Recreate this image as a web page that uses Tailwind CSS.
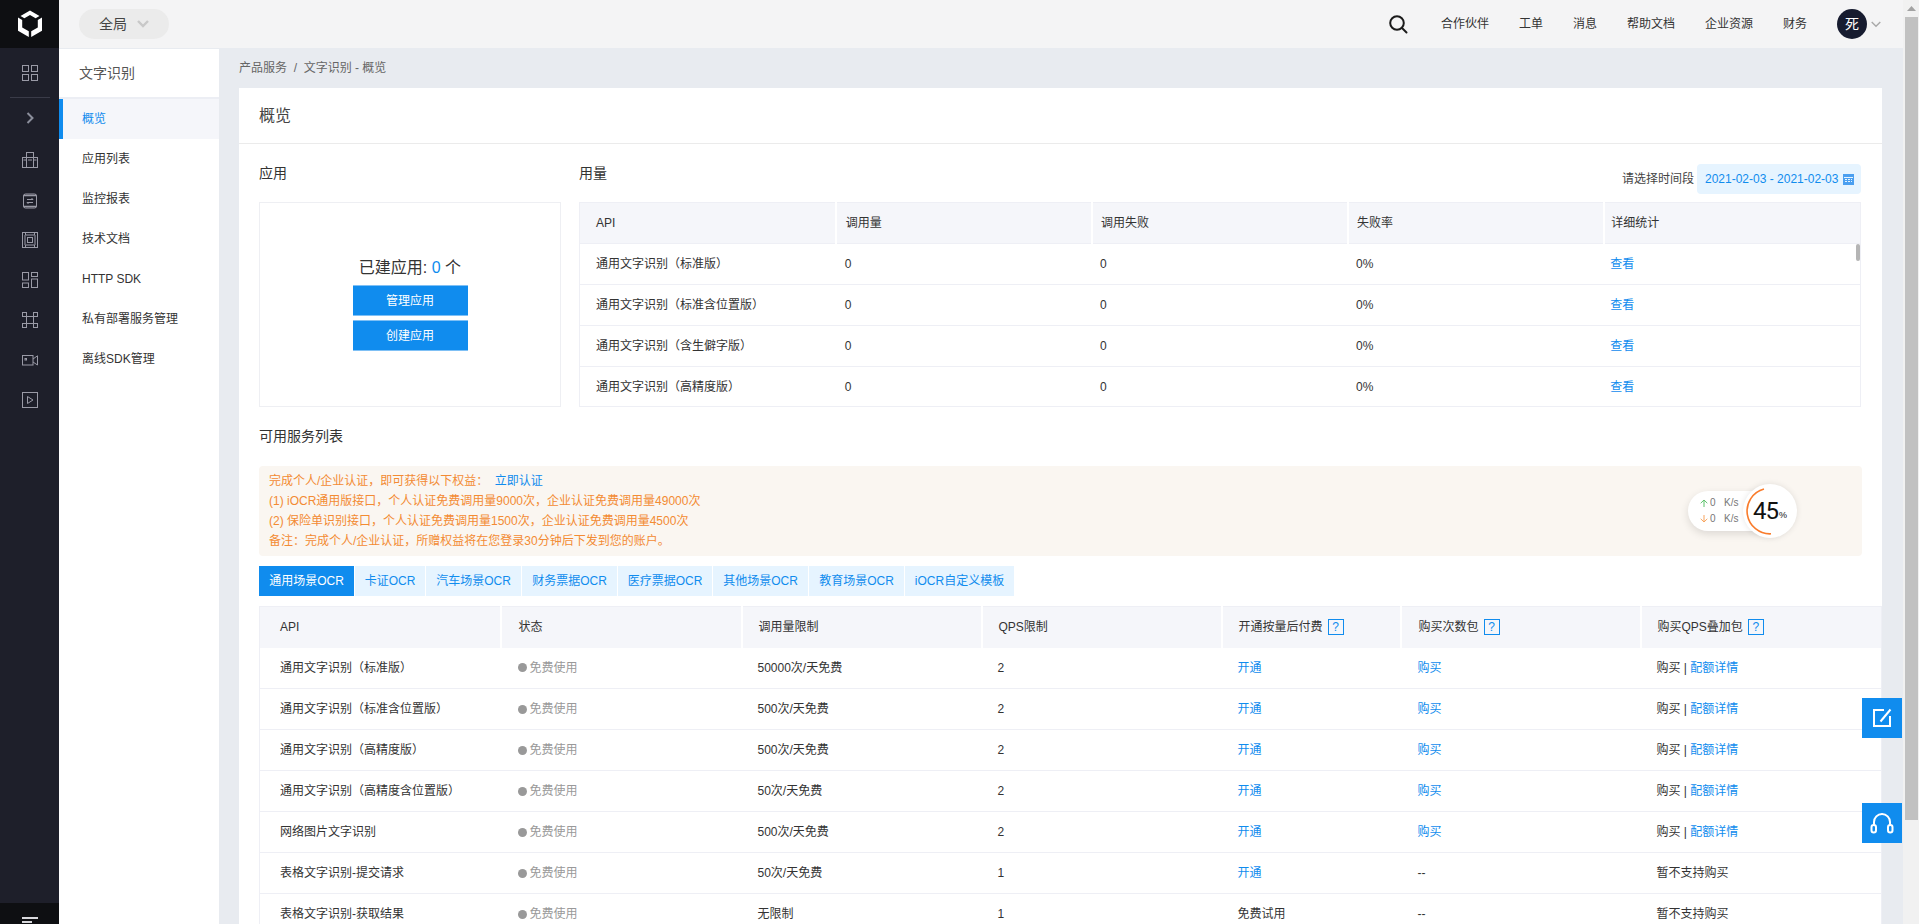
<!DOCTYPE html>
<html lang="zh-CN">
<head>
    <meta charset="UTF-8">
    <title>文字识别 - 概览</title>
    <script src="https://cdn.jsdelivr.net/npm/@tailwindcss/browser@4"></script>
</head>
<body class="flex h-[924px] overflow-hidden bg-[#e8ebf0] text-[12px] text-[#333] font-['Liberation_Sans','Noto_Sans_CJK_SC',sans-serif]">

    <!-- rail -->
    <aside class="w-[59px] shrink-0 h-full flex flex-col items-center bg-[#1e1f2a]">
        <div class="w-full h-[48px] bg-[#0e0f12] flex items-center justify-center">
            <svg width="26" height="28" viewBox="0 0 26 28" fill="#fff"><path d="M13 0.5 22.5 6 18.6 8.2 13 5 7.4 8.2 3.5 6Z"/><path d="M1 7.5 5.2 10V17.5L11.8 21.3V27L1 20.8Z"/><path d="M25 7.5 20.8 10V17.5L14.2 21.3V27L25 20.8Z"/></svg>
        </div>
        <div class="w-[40px] h-[50px] flex items-center justify-center border-b border-[#3a3b48]">
            <svg width="16" height="16" viewBox="0 0 16 16" fill="none" stroke="#9a9aa6"><rect x=".5" y=".5" width="6" height="6"/><rect x="9.5" y=".5" width="6" height="6"/><rect x=".5" y="9.5" width="6" height="6"/><rect x="9.5" y="9.5" width="6" height="6"/></svg>
        </div>
        <div class="h-[40px] flex items-center justify-center">
            <svg width="8" height="12" viewBox="0 0 8 12" fill="none" stroke="#8b8e9b" stroke-width="2"><path d="M1.5 1 6.5 6 1.5 11"/></svg>
        </div>
        <div class="h-[44px] flex items-center justify-center">
            <svg width="16" height="16" viewBox="0 0 16 16" fill="none" stroke="#9a9aa6"><rect x=".5" y="5.5" width="15" height="10"/><rect x="4.5" y=".5" width="7" height="15"/><path d="M6 5.5H10M1.5 8H4M12 8H14.5M6 8H10"/></svg>
        </div>
        <div class="h-[38px] flex items-center justify-center">
            <svg width="16" height="16" viewBox="0 0 16 16" fill="none" stroke="#9a9aa6"><rect x="1.5" y="1" width="13" height="14" rx="2"/><path d="M1.5 2.5H14.5M1.5 13.5H14.5" stroke-width="1.4"/><path d="M5 6.5H11L9.5 5M11 9.5H5L6.5 11"/></svg>
        </div>
        <div class="h-[40px] flex items-center justify-center">
            <svg width="16" height="16" viewBox="0 0 16 16" fill="none" stroke="#9a9aa6"><rect x=".5" y=".5" width="15" height="15"/><path d="M3.5 .5V3H12.5V.5M3.5 15.5V13H12.5V15.5M3 3V13M13 3V13"/><rect x="5.5" y="5.5" width="5" height="5"/></svg>
        </div>
        <div class="h-[40px] flex items-center justify-center">
            <svg width="16" height="16" viewBox="0 0 16 16" fill="none" stroke="#9a9aa6"><rect x=".5" y=".5" width="6" height="7.5"/><rect x=".5" y="11" width="6" height="4.5"/><rect x="9.5" y=".5" width="6" height="4"/><rect x="9.5" y="7" width="6" height="8.5"/></svg>
        </div>
        <div class="h-[40px] flex items-center justify-center">
            <svg width="16" height="16" viewBox="0 0 16 16" fill="none" stroke="#9a9aa6"><rect x=".5" y=".5" width="4" height="4"/><rect x="11.5" y=".5" width="4" height="4"/><rect x=".5" y="11.5" width="4" height="4"/><rect x="11.5" y="11.5" width="4" height="4"/><path d="M4.5 4.5H11.5V11.5H4.5Z"/></svg>
        </div>
        <div class="h-[40px] flex items-center justify-center">
            <svg width="16" height="11" viewBox="0 0 16 11" fill="none" stroke="#9a9aa6"><rect x=".5" y=".5" width="10.5" height="9.5"/><rect x="3" y="3.5" width="1.5" height="1.5"/><path d="M11 4 15.5 .8V10L11 7"/></svg>
        </div>
        <div class="h-[40px] flex items-center justify-center">
            <svg width="16" height="16" viewBox="0 0 16 16" fill="none" stroke="#9a9aa6"><rect x=".5" y=".5" width="15" height="15"/><path d="M5.5 4.5 11 8 5.5 11.5Z"/></svg>
        </div>
        <div class="mt-auto w-full h-[21px] bg-[#0e0f12] flex justify-center overflow-hidden">
            <svg class="mt-[14px] shrink-0" width="16" height="10" viewBox="0 0 16 10" fill="none" stroke="#d8d8dc" stroke-width="2"><path d="M0 1H16M0 5H10M0 9H16"/></svg>
        </div>
    </aside>

    <div class="flex-1 min-w-0 flex flex-col">
        <!-- top bar -->
        <header class="h-[48px] shrink-0 bg-[#f4f4f5] flex items-center justify-between pl-[20px] pr-[22px]">
            <div class="w-[90px] h-[30px] rounded-[15px] bg-[#ebebeb] flex items-center pl-[20px] gap-[10px] text-[14px] text-[#444]">
                全局
                <svg width="12" height="8" viewBox="0 0 12 8" fill="none" stroke="#c8c8c8" stroke-width="2.4"><path d="M1 1 6 6 11 1"/></svg>
            </div>
            <div class="flex items-center gap-[30px]">
                <svg class="mr-[3px]" width="19" height="19" viewBox="0 0 19 19" fill="none" stroke="#1a1a1a" stroke-width="2"><circle cx="8" cy="8" r="6.8"/><path d="M13 13 17.5 17.5" stroke-linecap="round"/></svg>
                <span>合作伙伴</span>
                <span>工单</span>
                <span>消息</span>
                <span>帮助文档</span>
                <span>企业资源</span>
                <span>财务</span>
                <div class="flex items-center gap-[4px]">
                    <div class="w-[30px] h-[30px] rounded-full bg-[#171c30] text-white text-[14px] flex items-center justify-center">死</div>
                    <svg width="10" height="7" viewBox="0 0 10 7" fill="none" stroke="#a9a9a9" stroke-width="1.4"><path d="M.7 1 5 5.3 9.3 1"/></svg>
                </div>
            </div>
        </header>

        <div class="flex-1 min-h-0 flex">
            <!-- sub nav -->
            <nav class="w-[160px] shrink-0 mt-[1px] bg-white">
                <div class="h-[50px] flex items-center pl-[20px] text-[14px] text-[#555] border-b-2 border-[#eceef4]">文字识别</div>
                <a class="h-[40px] flex items-center pl-[19px] border-l-4 border-[#108cee] bg-[#f5f6fa] text-[#108cee]">概览</a>
                <a class="h-[40px] flex items-center pl-[23px]">应用列表</a>
                <a class="h-[40px] flex items-center pl-[23px]">监控报表</a>
                <a class="h-[40px] flex items-center pl-[23px]">技术文档</a>
                <a class="h-[40px] flex items-center pl-[23px]">HTTP SDK</a>
                <a class="h-[40px] flex items-center pl-[23px]">私有部署服务管理</a>
                <a class="h-[40px] flex items-center pl-[23px]">离线SDK管理</a>
            </nav>

            <main class="flex-1 min-w-0 pl-[20px] pr-[21px]">
                <div class="h-[40px] flex items-center text-[#666]">产品服务&nbsp;&nbsp;/&nbsp;&nbsp;文字识别 - 概览</div>

                <section class="bg-white">
                    <h1 class="h-[56px] flex items-center pl-[20px] text-[16px] text-[#444] border-b border-[#ebebeb]">概览</h1>

                    <div class="pl-[20px]">
                        <!-- 应用 / 用量 -->
                        <div class="flex gap-[18px] pr-[21px]">
                            <div class="w-[302px] shrink-0">
                                <h2 class="h-[58px] flex items-center text-[14px]">应用</h2>
                                <div class="h-[205px] border border-[#eeeff3] flex flex-col items-center pt-[52px]">
                                    <p class="h-[26px] text-[16px] leading-[26px]">已建应用: <span class="text-[#108cee]">0</span> 个</p>
                                    <button class="w-[115px] h-[31px] mt-[4px] bg-[#108cee] text-white border-y border-[#7fc0f5]">管理应用</button>
                                    <button class="w-[115px] h-[31px] mt-[4px] bg-[#108cee] text-white border-y border-[#7fc0f5]">创建应用</button>
                                </div>
                            </div>
                            <div class="flex-1 min-w-0">
                                <div class="h-[58px] flex justify-between items-start">
                                    <h2 class="h-[58px] flex items-center text-[14px]">用量</h2>
                                    <div class="mt-[20px] flex items-center gap-[3px]">
                                        <span class="text-[#444]">请选择时间段</span>
                                        <div class="w-[164px] h-[30px] rounded-[4px] bg-[#e6f4ff] text-[#108cee] flex items-center pl-[8px] gap-[5px]">
                                            2021-02-03 - 2021-02-03
                                            <svg width="11" height="11" viewBox="0 0 11 11"><path fill="#4a9ff0" d="M0 0H11V11H0Z"/><path fill="#e6f4ff" d="M1 3H10V4H1ZM2 5H4V6H2ZM5 5H7V6H5ZM8 5H9V6H8ZM2 7H4V8H2ZM5 7H7V8H5ZM8 7H9V8H8Z"/></svg>
                                        </div>
                                    </div>
                                </div>
                                <div class="relative h-[205px] overflow-hidden">
                                    <table class="table-fixed w-full border border-[#eeeff5]">
                                        <thead>
                                            <tr class="h-[41px] bg-[#f5f6fa] text-left border-b border-[#eeeff5]">
                                                <th class="font-normal pl-[16px] border-r-2 border-white">API</th>
                                                <th class="font-normal pl-[9px] border-r-2 border-white">调用量</th>
                                                <th class="font-normal pl-[8px] border-r-2 border-white">调用失败</th>
                                                <th class="font-normal pl-[8px] border-r-2 border-white">失败率</th>
                                                <th class="font-normal pl-[6px]">详细统计</th>
                                            </tr>
                                        </thead>
                                        <tbody>
                                            <tr class="h-[41px] border-b border-[#eeeff5]"><td class="pl-[16px]">通用文字识别（标准版）</td><td class="pl-[9px]">0</td><td class="pl-[8px]">0</td><td class="pl-[8px]">0%</td><td class="pl-[6px] text-[#108cee]">查看</td></tr>
                                            <tr class="h-[41px] border-b border-[#eeeff5]"><td class="pl-[16px]">通用文字识别（标准含位置版）</td><td class="pl-[9px]">0</td><td class="pl-[8px]">0</td><td class="pl-[8px]">0%</td><td class="pl-[6px] text-[#108cee]">查看</td></tr>
                                            <tr class="h-[41px] border-b border-[#eeeff5]"><td class="pl-[16px]">通用文字识别（含生僻字版）</td><td class="pl-[9px]">0</td><td class="pl-[8px]">0</td><td class="pl-[8px]">0%</td><td class="pl-[6px] text-[#108cee]">查看</td></tr>
                                            <tr class="h-[40px] border-b border-[#eeeff5]"><td class="pl-[16px]">通用文字识别（高精度版）</td><td class="pl-[9px]">0</td><td class="pl-[8px]">0</td><td class="pl-[8px]">0%</td><td class="pl-[6px] text-[#108cee]">查看</td></tr>
                                        </tbody>
                                    </table>
                                    <div class="absolute right-[1px] top-[42px] w-[4px] h-[17px] rounded-[2px] bg-[#b5b5b5]"></div>
                                </div>
                            </div>
                        </div>

                        <h2 class="h-[59px] flex items-center text-[14px]">可用服务列表</h2>

                        <!-- notice -->
                        <div class="relative w-[1603px] h-[90px] rounded-[4px] bg-[#faf6f1] py-[5px] pl-[10px] leading-[20px] text-[#f38b33]">
                            <p>完成个人/企业认证，即可获得以下权益： <a class="ml-[3px] text-[#108cee]">立即认证</a></p>
                            <p>(1) iOCR通用版接口，个人认证免费调用量9000次，企业认证免费调用量49000次</p>
                            <p>(2) 保险单识别接口，个人认证免费调用量1500次，企业认证免费调用量4500次</p>
                            <p>备注：完成个人/企业认证，所赠权益将在您登录30分钟后下发到您的账户。</p>
                            <!-- net speed widget -->
                            <div class="absolute left-[1429px] top-[25px] w-[100px] h-[40px] rounded-[20px] bg-white shadow-[0_3px_8px_rgba(0,0,0,0.12)] pl-[12px] pt-[4px] text-[10px] leading-[16px] text-[#777]">
                                <div class="flex items-center gap-[2px]">
                                    <svg width="8" height="8" viewBox="0 0 8 8" fill="none" stroke="#5cc26a"><path d="M4 8V1M.7 4.2 4 1 7.3 4.2"/></svg>
                                    <span class="w-[12px]">0</span><span>K/s</span>
                                </div>
                                <div class="flex items-center gap-[2px]">
                                    <svg width="8" height="8" viewBox="0 0 8 8" fill="none" stroke="#f7a45f"><path d="M4 0V7M.7 3.8 4 7 7.3 3.8"/></svg>
                                    <span class="w-[12px]">0</span><span>K/s</span>
                                </div>
                            </div>
                            <div class="absolute left-[1484px] top-[18px] w-[54px] h-[54px] rounded-full bg-white shadow-[0_0_6px_rgba(0,0,0,0.1)] flex items-center justify-center text-[#111]">
                                <svg class="absolute inset-0" width="54" height="54" viewBox="0 0 54 54" fill="none" stroke="#f97c2c" stroke-width="1.6"><path d="M21 5A22.8 22.8 0 0 0 28 49.8"/></svg>
                                <span class="text-[24px] leading-none tracking-[-1px] font-['Roboto',sans-serif]">45</span><span class="text-[9px] mt-[8px] ml-[1px]">%</span>
                            </div>
                        </div>

                        <!-- tabs -->
                        <div class="flex gap-px mt-[10px] mb-[10px] h-[30px] leading-[30px] text-[#108cee]">
                            <a class="w-[95px] text-center bg-[#108cee] text-white">通用场景OCR</a>
                            <a class="w-[70px] text-center bg-[#e6f4ff]">卡证OCR</a>
                            <a class="w-[95px] text-center bg-[#e6f4ff]">汽车场景OCR</a>
                            <a class="w-[95px] text-center bg-[#e6f4ff]">财务票据OCR</a>
                            <a class="w-[94px] text-center bg-[#e6f4ff]">医疗票据OCR</a>
                            <a class="w-[95px] text-center bg-[#e6f4ff]">其他场景OCR</a>
                            <a class="w-[95px] text-center bg-[#e6f4ff]">教育场景OCR</a>
                            <a class="w-[109px] text-center bg-[#e6f4ff]">iOCR自定义模板</a>
                        </div>

                        <!-- services -->
                        <table class="table-fixed w-[1622px] border-x border-t border-[#eeeff5]">
                            <colgroup><col class="w-[241px]"><col class="w-[241px]"><col class="w-[240px]"><col class="w-[240px]"><col class="w-[179px]"><col class="w-[240px]"><col class="w-[241px]"></colgroup>
                            <thead>
                                <tr class="h-[41px] bg-[#f5f6fa] text-left">
                                    <th class="font-normal pl-[20px] border-r-2 border-white">API</th>
                                    <th class="font-normal pl-[17px] border-r-2 border-white">状态</th>
                                    <th class="font-normal pl-[16px] border-r-2 border-white">调用量限制</th>
                                    <th class="font-normal pl-[16px] border-r-2 border-white">QPS限制</th>
                                    <th class="font-normal pl-[16px] border-r-2 border-white"><span class="flex items-center gap-[5px]">开通按量后付费<i class="w-[16px] h-[16px] border border-[#108cee] text-[#108cee] not-italic text-center leading-[14px]">?</i></span></th>
                                    <th class="font-normal pl-[17px] border-r-2 border-white"><span class="flex items-center gap-[5px]">购买次数包<i class="w-[16px] h-[16px] border border-[#108cee] text-[#108cee] not-italic text-center leading-[14px]">?</i></span></th>
                                    <th class="font-normal pl-[16px]"><span class="flex items-center gap-[5px]">购买QPS叠加包<i class="w-[16px] h-[16px] border border-[#108cee] text-[#108cee] not-italic text-center leading-[14px]">?</i></span></th>
                                </tr>
                            </thead>
                            <tbody>
                                <tr class="h-[41px] border-b border-[#eeeff5]">
                                    <td class="pl-[20px]">通用文字识别（标准版）</td>
                                    <td class="pl-[17px] text-[#999]"><span class="flex items-center gap-[3px]"><i class="w-[9px] h-[9px] rounded-full bg-[#999]"></i>免费使用</span></td>
                                    <td class="pl-[16px]">50000次/天免费</td><td class="pl-[16px]">2</td>
                                    <td class="pl-[16px] text-[#108cee]">开通</td><td class="pl-[17px] text-[#108cee]">购买</td>
                                    <td class="pl-[16px]">购买 | <a class="text-[#108cee]">配额详情</a></td>
                                </tr>
                                <tr class="h-[41px] border-b border-[#eeeff5]">
                                    <td class="pl-[20px]">通用文字识别（标准含位置版）</td>
                                    <td class="pl-[17px] text-[#999]"><span class="flex items-center gap-[3px]"><i class="w-[9px] h-[9px] rounded-full bg-[#999]"></i>免费使用</span></td>
                                    <td class="pl-[16px]">500次/天免费</td><td class="pl-[16px]">2</td>
                                    <td class="pl-[16px] text-[#108cee]">开通</td><td class="pl-[17px] text-[#108cee]">购买</td>
                                    <td class="pl-[16px]">购买 | <a class="text-[#108cee]">配额详情</a></td>
                                </tr>
                                <tr class="h-[41px] border-b border-[#eeeff5]">
                                    <td class="pl-[20px]">通用文字识别（高精度版）</td>
                                    <td class="pl-[17px] text-[#999]"><span class="flex items-center gap-[3px]"><i class="w-[9px] h-[9px] rounded-full bg-[#999]"></i>免费使用</span></td>
                                    <td class="pl-[16px]">500次/天免费</td><td class="pl-[16px]">2</td>
                                    <td class="pl-[16px] text-[#108cee]">开通</td><td class="pl-[17px] text-[#108cee]">购买</td>
                                    <td class="pl-[16px]">购买 | <a class="text-[#108cee]">配额详情</a></td>
                                </tr>
                                <tr class="h-[41px] border-b border-[#eeeff5]">
                                    <td class="pl-[20px]">通用文字识别（高精度含位置版）</td>
                                    <td class="pl-[17px] text-[#999]"><span class="flex items-center gap-[3px]"><i class="w-[9px] h-[9px] rounded-full bg-[#999]"></i>免费使用</span></td>
                                    <td class="pl-[16px]">50次/天免费</td><td class="pl-[16px]">2</td>
                                    <td class="pl-[16px] text-[#108cee]">开通</td><td class="pl-[17px] text-[#108cee]">购买</td>
                                    <td class="pl-[16px]">购买 | <a class="text-[#108cee]">配额详情</a></td>
                                </tr>
                                <tr class="h-[41px] border-b border-[#eeeff5]">
                                    <td class="pl-[20px]">网络图片文字识别</td>
                                    <td class="pl-[17px] text-[#999]"><span class="flex items-center gap-[3px]"><i class="w-[9px] h-[9px] rounded-full bg-[#999]"></i>免费使用</span></td>
                                    <td class="pl-[16px]">500次/天免费</td><td class="pl-[16px]">2</td>
                                    <td class="pl-[16px] text-[#108cee]">开通</td><td class="pl-[17px] text-[#108cee]">购买</td>
                                    <td class="pl-[16px]">购买 | <a class="text-[#108cee]">配额详情</a></td>
                                </tr>
                                <tr class="h-[41px] border-b border-[#eeeff5]">
                                    <td class="pl-[20px]">表格文字识别-提交请求</td>
                                    <td class="pl-[17px] text-[#999]"><span class="flex items-center gap-[3px]"><i class="w-[9px] h-[9px] rounded-full bg-[#999]"></i>免费使用</span></td>
                                    <td class="pl-[16px]">50次/天免费</td><td class="pl-[16px]">1</td>
                                    <td class="pl-[16px] text-[#108cee]">开通</td><td class="pl-[17px]">--</td>
                                    <td class="pl-[16px]">暂不支持购买</td>
                                </tr>
                                <tr class="h-[41px] border-b border-[#eeeff5]">
                                    <td class="pl-[20px]">表格文字识别-获取结果</td>
                                    <td class="pl-[17px] text-[#999]"><span class="flex items-center gap-[3px]"><i class="w-[9px] h-[9px] rounded-full bg-[#999]"></i>免费使用</span></td>
                                    <td class="pl-[16px]">无限制</td><td class="pl-[16px]">1</td>
                                    <td class="pl-[16px]">免费试用</td><td class="pl-[17px]">--</td>
                                    <td class="pl-[16px]">暂不支持购买</td>
                                </tr>
                            </tbody>
                        </table>
                    </div>
                </section>
            </main>
        </div>
    </div>

    <!-- page scrollbar -->
    <div class="w-[16px] shrink-0 h-full bg-[#f1f1f1] flex flex-col items-center">
        <div class="h-[17px] flex items-center justify-center">
            <svg width="9" height="5" viewBox="0 0 9 5"><path fill="#a3a3a3" d="M4.5 0 9 5H0Z"/></svg>
        </div>
        <div class="w-[13px] h-[803px] bg-[#c1c1c1]"></div>
    </div>

    <!-- floating buttons -->
    <a class="fixed left-[1862px] top-[698px] w-[40px] h-[40px] bg-[#108cee] flex items-center justify-center">
        <svg width="20" height="20" viewBox="0 0 20 20" fill="none" stroke="#fff" stroke-width="2"><path d="M12 2H2V18H18V8"/><path d="M18.5 1.5 8.5 13.5"/></svg>
    </a>
    <a class="fixed left-[1862px] top-[803px] w-[40px] h-[40px] bg-[#108cee] flex items-center justify-center">
        <svg width="24" height="22" viewBox="0 0 24 22" fill="none" stroke="#fff" stroke-width="2"><path d="M4 13V10A8 8 0 0 1 20 10V13"/><rect x="1.5" y="13" width="4.5" height="7.5" rx="2.2"/><rect x="18" y="13" width="4.5" height="7.5" rx="2.2"/></svg>
    </a>
</body>
</html>
